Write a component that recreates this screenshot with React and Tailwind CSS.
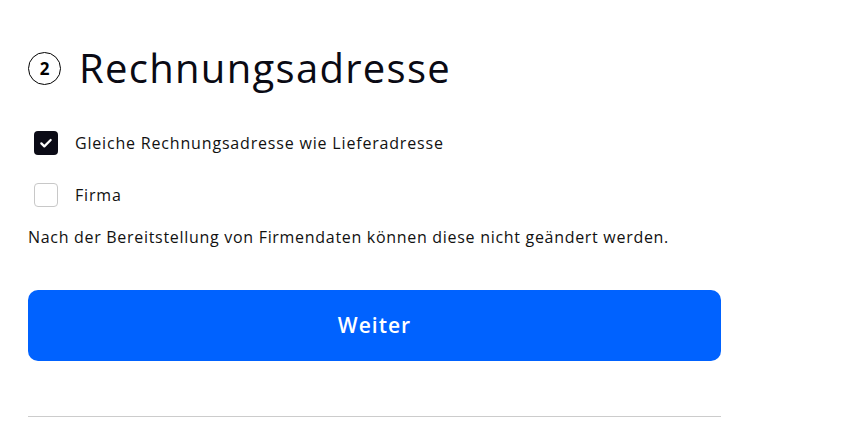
export default function App() {
  return (
    <div className="w-[862px] h-[444px] bg-white overflow-hidden" style={{ fontFamily: '"Open Sans", "Noto Sans", sans-serif' }}>
      <div className="w-[693px] ml-[28px] pt-[51px]">
        <div className="flex items-center h-[34px]">
          <div className="w-[33px] h-[33px] rounded-full border border-black flex items-center justify-center text-[17px] font-bold text-black leading-none">2</div>
          <h1 className="ml-[18px] text-[40px] leading-none font-medium text-[#0a0a14] tracking-[1.3px]">Rechnungsadresse</h1>
        </div>
        <div className="mt-[46px] flex items-center h-[24px] pl-[6px]">
          <div className="w-[24px] h-[24px] rounded-[4px] bg-[#0b0b16] flex items-center justify-center">
            <svg width="16" height="16" viewBox="0 0 24 24" fill="none" stroke="white" strokeWidth="3.4" strokeLinecap="round" strokeLinejoin="round"><path d="M5 12.5l4.5 4.5L19 7.5" /></svg>
          </div>
          <span className="ml-[17px] text-[16px] text-[#111] tracking-[0.82px]">Gleiche Rechnungsadresse wie Lieferadresse</span>
        </div>
        <div className="mt-[28px] flex items-center h-[24px] pl-[6px]">
          <div className="w-[24px] h-[24px] rounded-[4px] border border-[#c8c8c8] bg-white" />
          <span className="ml-[17px] text-[16px] text-[#111] tracking-[0.82px]">Firma</span>
        </div>
        <p className="mt-[18px] text-[16px] leading-[24px] text-[#111] tracking-[0.7px]">Nach der Bereitstellung von Firmendaten können diese nicht geändert werden.</p>
        <button className="mt-[41px] w-full h-[71px] rounded-[10px] bg-[#0062ff] text-white text-[21px] font-semibold tracking-[1px]">Weiter</button>
        <div className="mt-[55px] h-px bg-[#cccccc]" />
      </div>
    </div>
  );
}
